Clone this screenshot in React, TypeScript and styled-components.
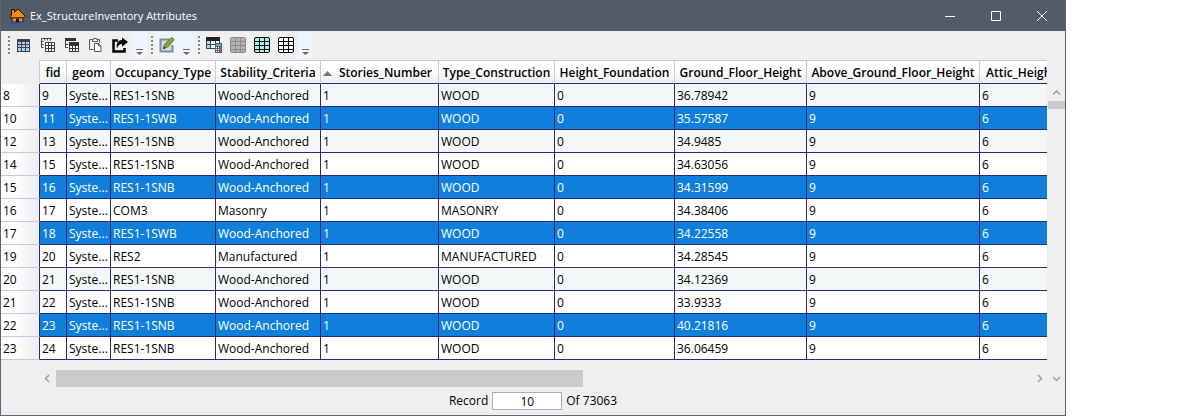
import React from "react";
import styled, { createGlobalStyle } from "styled-components";

const GlobalStyle = createGlobalStyle`
  *, *::before, *::after { box-sizing: border-box; }
  body { margin: 0; background: #fff; font: 12px/16px "Open Sans", "Noto Sans", sans-serif; color: #000; }
  button, input { font: inherit; color: inherit; }
`;

const Window = styled.main`
  margin-right: 129px;
  background: #efefef;
  border: 1px solid #5d6672;
  border-top-color: #4b5866;
  display: flex;
  flex-direction: column;
`;

const TitleBar = styled.header`
  height: 30px;
  background: #525c69;
  color: #fff;
  display: flex;
  align-items: center;
  padding-left: 8px;
`;

const Title = styled.h1`
  flex: 1;
  margin: 0 0 0 4px;
  font-size: 11px;
  font-weight: 400;
`;

const CaptionButton = styled.button`
  width: 46px;
  height: 30px;
  border: 0;
  padding: 0;
  background: none;
  display: grid;
  place-items: center;
`;

const Toolbar = styled.div`
  height: 29px;
  display: flex;
  align-items: center;
  gap: 4px;
  padding: 0 0 1px 7px;
`;

const ToolGroup = styled.div`
  display: flex;
  align-items: center;
`;

const Grip = styled.span`
  width: 4px;
  height: 18px;
  background: repeating-linear-gradient(#858585 0 2px, transparent 2px 4px) 0 0 / 2px 18px no-repeat;
`;

const ToolButton = styled.button<{ $soft?: boolean }>`
  width: 24px;
  height: 26px;
  padding: 0;
  border: 0;
  background: ${p => (p.$soft ? "#edf4fc" : "none")};
  display: grid;
  place-items: center;
`;

const MoreButton = styled.button`
  width: 15px;
  height: 26px;
  padding: 0 0 3px;
  border: 0;
  border-radius: 0 3px 3px 0;
  background: #edf4fc;
  display: flex;
  align-items: flex-end;
  justify-content: center;
`;

const Body = styled.div`
  display: flex;
  align-items: stretch;
`;

const TableView = styled.div`
  flex: 1;
  min-width: 0;
  overflow: hidden;
`;

const Table = styled.table`
  table-layout: fixed;
  width: 100%;
  border-collapse: separate;
  border-spacing: 0;
  white-space: nowrap;
`;

const HeadCell = styled.th`
  height: 24px;
  padding: 2px 0 0;
  border: solid #c9c8dc;
  border-width: 1px 1px 1px 0;
  border-bottom-color: #2b2c70;
  background: linear-gradient(#fff 40%, #ececf2);
  font-weight: 600;
  overflow: hidden;
  &:last-child { border-right: 0; padding-left: 6px; text-align: left; }
`;

const CornerCell = styled.td`
  padding: 0;
  border-right: 1px solid #c9c8dc;
`;

const Sorted = styled.span`
  display: flex;
  align-items: center;
  justify-content: space-between;
  padding: 0 6px 0 2px;
`;

const RowHead = styled.th`
  height: 23px;
  padding: 2px 0 0 2px;
  border: solid #c9c8dc;
  border-width: 0 1px 1px 0;
  border-right-color: #2b2c70;
  background: linear-gradient(90deg, #fff 35%, #ececf2);
  font-weight: 400;
  text-align: left;
`;

const Row = styled.tr<{ $tone: Tone }>`
  background: ${p => ({ selected: "#0f7fdb", tinted: "#f2f8f7", plain: "#fff" })[p.$tone]};
  color: ${p => (p.$tone === "selected" ? "#fff" : "#000")};
  ${RowHead} { color: #000; }
`;

const Cell = styled.td`
  height: 23px;
  padding: 2px 0 0 2px;
  border: solid #2b2c70;
  border-width: 0 1px 1px 0;
  overflow: hidden;
  &:last-child { border-right: 0; }
`;

const VerticalScroll = styled.div`
  width: 18px;
  display: flex;
  flex-direction: column;
  align-items: center;
  padding-top: 24px;
`;

const VerticalThumb = styled.div`
  width: 17px;
  height: 8px;
  margin-bottom: auto;
  background: #cbcbcb;
`;

const ArrowButton = styled.button`
  width: 17px;
  height: 17px;
  padding: 0;
  border: 0;
  background: none;
  display: grid;
  place-items: center;
`;

const HorizontalScroll = styled.div`
  display: flex;
  align-items: center;
  margin-top: 10px;
  padding-left: 38px;
`;

const Track = styled.div`
  flex: 1;
`;

const HorizontalThumb = styled.div`
  width: 54%;
  height: 17px;
  background: #cbcbcb;
`;

const RecordBar = styled.footer`
  display: flex;
  align-items: center;
  justify-content: center;
  gap: 4px;
  height: 28px;
`;

const RecordInput = styled.input`
  width: 70px;
  height: 18px;
  padding: 0;
  border: 1px solid #abadb3;
  background: #fff;
  text-align: center;
`;

type Tone = "selected" | "tinted" | "plain";
type Rec = [string, Tone, string, string, string, string, string];

const records: Rec[] = [
  ["8", "tinted", "9", "RES1-1SNB", "Wood-Anchored", "WOOD", "36.78942"],
  ["10", "selected", "11", "RES1-1SWB", "Wood-Anchored", "WOOD", "35.57587"],
  ["12", "tinted", "13", "RES1-1SNB", "Wood-Anchored", "WOOD", "34.9485"],
  ["14", "plain", "15", "RES1-1SNB", "Wood-Anchored", "WOOD", "34.63056"],
  ["15", "selected", "16", "RES1-1SNB", "Wood-Anchored", "WOOD", "34.31599"],
  ["16", "plain", "17", "COM3", "Masonry", "MASONRY", "34.38406"],
  ["17", "selected", "18", "RES1-1SWB", "Wood-Anchored", "WOOD", "34.22558"],
  ["19", "plain", "20", "RES2", "Manufactured", "MANUFACTURED", "34.28545"],
  ["20", "tinted", "21", "RES1-1SNB", "Wood-Anchored", "WOOD", "34.12369"],
  ["21", "plain", "22", "RES1-1SNB", "Wood-Anchored", "WOOD", "33.9333"],
  ["22", "selected", "23", "RES1-1SNB", "Wood-Anchored", "WOOD", "40.21816"],
  ["23", "plain", "24", "RES1-1SNB", "Wood-Anchored", "WOOD", "36.06459"],
];

const columns: [string, number?][] = [
  ["fid", 27], ["geom", 44], ["Occupancy_Type", 105], ["Stability_Criteria", 105],
  ["Stories_Number", 118], ["Type_Construction", 116], ["Height_Foundation", 120],
  ["Ground_Floor_Height", 132], ["Above_Ground_Floor_Height", 173], ["Attic_Height"],
];

const Icon = ({ children }: { children: React.ReactNode }) => (
  <svg width="16" height="16" viewBox="0 0 16 16" fill="none" aria-hidden="true">{children}</svg>
);

const HouseIcon = () => (
  <svg width="17" height="17" viewBox="0 0 17 17" aria-hidden="true">
    <path d="M3 8.500V14h11V8.500L8.500 3z" fill="#f08c14" stroke="#1d1408" />
    <path d="M2.500 7V1.500h3V4L9 .8l7.200 7.400-1.400 1.600H2L.8 9z" fill="#f08c14" stroke="#1d1408" />
    <path d="M7 14v-3.500h3V14z" fill="#2b1b08" />
    <path d="M1 14.500c2.500-2 4-1 6 0s4.500-2 8.500-.5l-1 1.500c-3-1-4.500 1-7 1s-3.500-1.500-6.500-.5z" fill="#0f5fc4" />
  </svg>
);

const TableIcon = () => (
  <Icon>
    <path d="M1 2h13v13H1z" fill="#3d4148" />
    <path d="M2 5h3v2H2zm4 0h3v2H6zm4 0h3v2h-3zM2 8h3v2H2zm4 0h3v2H6zm4 0h3v2h-3zM2 11h3v3H2zm4 0h3v3H6zm4 0h3v3h-3z" fill="#a9cdf5" />
  </Icon>
);

const CopyTableIcon = () => (
  <Icon>
    <path d="M1.500 10.500v-9h10M1.500 4.500h2M1.500 7.500h2M4.500 1.500v2M7.500 1.500v2M10.500 1.500v2M1.500 10.500h2" stroke="#444" />
    <path d="M5 5h10v10H5z" fill="#fff" />
    <path d="M5.500 5.500h9v9h-9zM5.500 8.500h9M5.500 11.500h9M8.500 5.500v9M11.500 5.500v9" stroke="#3d3d3d" />
  </Icon>
);

const CopyHeaderIcon = () => (
  <Icon>
    <path d="M1 1h11v3H1z" fill="#333" />
    <path d="M1.500 4v6.500H4M1.500 7.500H4" stroke="#444" />
    <path d="M5 5h10v10H5z" fill="#fff" />
    <path d="M5 5h10v4H5z" fill="#333" />
    <path d="M5.500 8.500h9v6h-9zM5.500 11.500h9M8.500 8.500v6M11.500 8.500v6" stroke="#333" />
  </Icon>
);

const PasteIcon = () => (
  <Icon>
    <path d="M5.500 12.500h-4v-10h3m5 0h2v3" stroke="#555" />
    <path d="M4.500 4.500v-2h1v-1h3v1h1v2z" fill="#fff" stroke="#555" />
    <path d="M6.500 6.500h4l2.500 2.500v5.500H6.500z" fill="#fff" stroke="#555" />
    <path d="M10.500 6.500V9H13" stroke="#555" />
  </Icon>
);

const ShareIcon = () => (
  <Icon>
    <path d="M6 3.500H1.500v11h11V11" stroke="#000" strokeWidth="2.500" />
    <path d="M10 .5 16 5l-6 4.800V7C7.500 7 6 8.500 5 11.500 3.500 6 6.500 3 10 3z" fill="#000" />
  </Icon>
);

const EditIcon = () => (
  <Icon>
    <path d="M1.500 2.500h12v12h-12z" fill="#d3d9e2" />
    <path d="M10 2.500H1.500v12h12V8" stroke="#858c96" strokeWidth="2" />
    <path d="m4.500 11.500 1-4L12 .8c1-.6 3 .8 2.800 2.200L8.500 10z" fill="#8aa53c" stroke="#5d7420" />
    <path d="m4 12 .8-2.400L6.600 11.200z" fill="#333" />
  </Icon>
);

const CalculatorIcon = () => (
  <Icon>
    <path d="M.5.5h13v11H.5z" fill="#fff" />
    <path d="M0 0h14v4H0z" fill="#222" />
    <path d="M1 4h3v3H1zM1 8h3v3H1z" fill="#b9d2f6" />
    <path d="M.5 4v7.500H9M.5 7.500H9M4.500 4v7.500M9.500 4v2M13.500 4v2" stroke="#39415a" />
    <path d="M9 6h7v10H9z" fill="#5b6270" />
    <path d="M10 7h5v2h-5z" fill="#30c4dc" />
    <path d="M10 10h1v1h-1zm2 0h1v1h-1zm-2 2h1v1h-1zm2 0h1v1h-1zm-2 2h1v1h-1zm2 0h1v1h-1z" fill="#fff" />
    <path d="M14 10h1v5h-1z" fill="#e2574c" />
  </Icon>
);

const GridIcon = ({ fill, stroke }: { fill: string; stroke: string }) => (
  <Icon>
    <rect x="0.500" y="0.500" width="15" height="15" rx="1.500" fill={fill} stroke={stroke} />
    <path d="M1 4.500h14M1 8.500h14M1 12.500h14M5.500 1v14M10.500 1v14" stroke={stroke} />
  </Icon>
);

const More = ({ label }: { label: string }) => (
  <MoreButton aria-label={label}>
    <svg width="7" height="6" viewBox="0 0 7 6"><path d="M0 0h7v1H0zM0 3h7L3.500 6z" fill="#6d6d6d" /></svg>
  </MoreButton>
);

const Chevron = ({ d }: { d: string }) => (
  <svg width="9" height="9" viewBox="0 0 9 9"><path d={d} fill="none" stroke="#a0a0a0" strokeWidth="1.500" /></svg>
);

export default function App() {
  return (
    <>
      <GlobalStyle />
      <Window>
        <TitleBar>
          <HouseIcon />
          <Title>Ex_StructureInventory Attributes</Title>
          <CaptionButton aria-label="Minimize"><svg width="10" height="10"><path d="M0 5.500h10" stroke="#fff" /></svg></CaptionButton>
          <CaptionButton aria-label="Maximize"><svg width="10" height="10"><path d="M.5.5h9v9h-9z" stroke="#fff" fill="none" /></svg></CaptionButton>
          <CaptionButton aria-label="Close"><svg width="10" height="10"><path d="M0 0l10 10M10 0 0 10" stroke="#fff" /></svg></CaptionButton>
        </TitleBar>
        <Toolbar>
          <ToolGroup>
            <Grip />
            <ToolButton aria-label="Show table"><TableIcon /></ToolButton>
            <ToolButton aria-label="Copy cells"><CopyTableIcon /></ToolButton>
            <ToolButton aria-label="Copy cells with header"><CopyHeaderIcon /></ToolButton>
            <ToolButton aria-label="Paste"><PasteIcon /></ToolButton>
            <ToolButton aria-label="Export"><ShareIcon /></ToolButton>
            <More label="More table tools" />
          </ToolGroup>
          <ToolGroup>
            <Grip />
            <ToolButton $soft aria-label="Edit"><EditIcon /></ToolButton>
            <More label="More edit tools" />
          </ToolGroup>
          <ToolGroup>
            <Grip />
            <ToolButton aria-label="Field calculator"><CalculatorIcon /></ToolButton>
            <ToolButton aria-label="Clear selection"><GridIcon fill="#b4b4b4" stroke="#8a8a8a" /></ToolButton>
            <ToolButton aria-label="Select all"><GridIcon fill="#a4f4f4" stroke="#000" /></ToolButton>
            <ToolButton aria-label="Invert selection"><GridIcon fill="#fff" stroke="#000" /></ToolButton>
            <More label="More selection tools" />
          </ToolGroup>
        </Toolbar>
        <Body>
          <TableView>
            <Table>
              <colgroup>
                <col style={{ width: 39 }} />
                {columns.map(([name, width]) => <col key={name} style={{ width }} />)}
              </colgroup>
              <thead>
                <tr>
                  <CornerCell />
                  {columns.map(([name]) => (
                    <HeadCell key={name} scope="col">
                      {name === "Stories_Number" ? (
                        <Sorted><svg width="9" height="5"><path d="M0 5h9L4.500 0z" fill="#777" /></svg>{name}</Sorted>
                      ) : name}
                    </HeadCell>
                  ))}
                </tr>
              </thead>
              <tbody>
                {records.map(([n, tone, fid, occ, stab, type, ground]) => (
                  <Row key={n} $tone={tone}>
                    <RowHead scope="row">{n}</RowHead>
                    {[fid, "Syste...", occ, stab, "1", type, "0", ground, "9", "6"].map((v, i) => <Cell key={i}>{v}</Cell>)}
                  </Row>
                ))}
              </tbody>
            </Table>
          </TableView>
          <VerticalScroll>
            <ArrowButton aria-label="Scroll up"><Chevron d="M1 6.500 4.500 3 8 6.500" /></ArrowButton>
            <VerticalThumb />
          </VerticalScroll>
        </Body>
        <HorizontalScroll>
          <ArrowButton aria-label="Scroll left"><Chevron d="M6 1 2.500 4.500 6 8" /></ArrowButton>
          <Track><HorizontalThumb /></Track>
          <ArrowButton aria-label="Scroll right"><Chevron d="M3 1l3.500 3.500L3 8" /></ArrowButton>
          <ArrowButton aria-label="Scroll down"><Chevron d="M1 3l3.500 3.500L8 3" /></ArrowButton>
        </HorizontalScroll>
        <RecordBar>
          <label htmlFor="record">Record</label>
          <RecordInput id="record" defaultValue="10" />
          <span>Of 73063</span>
        </RecordBar>
      </Window>
    </>
  );
}
